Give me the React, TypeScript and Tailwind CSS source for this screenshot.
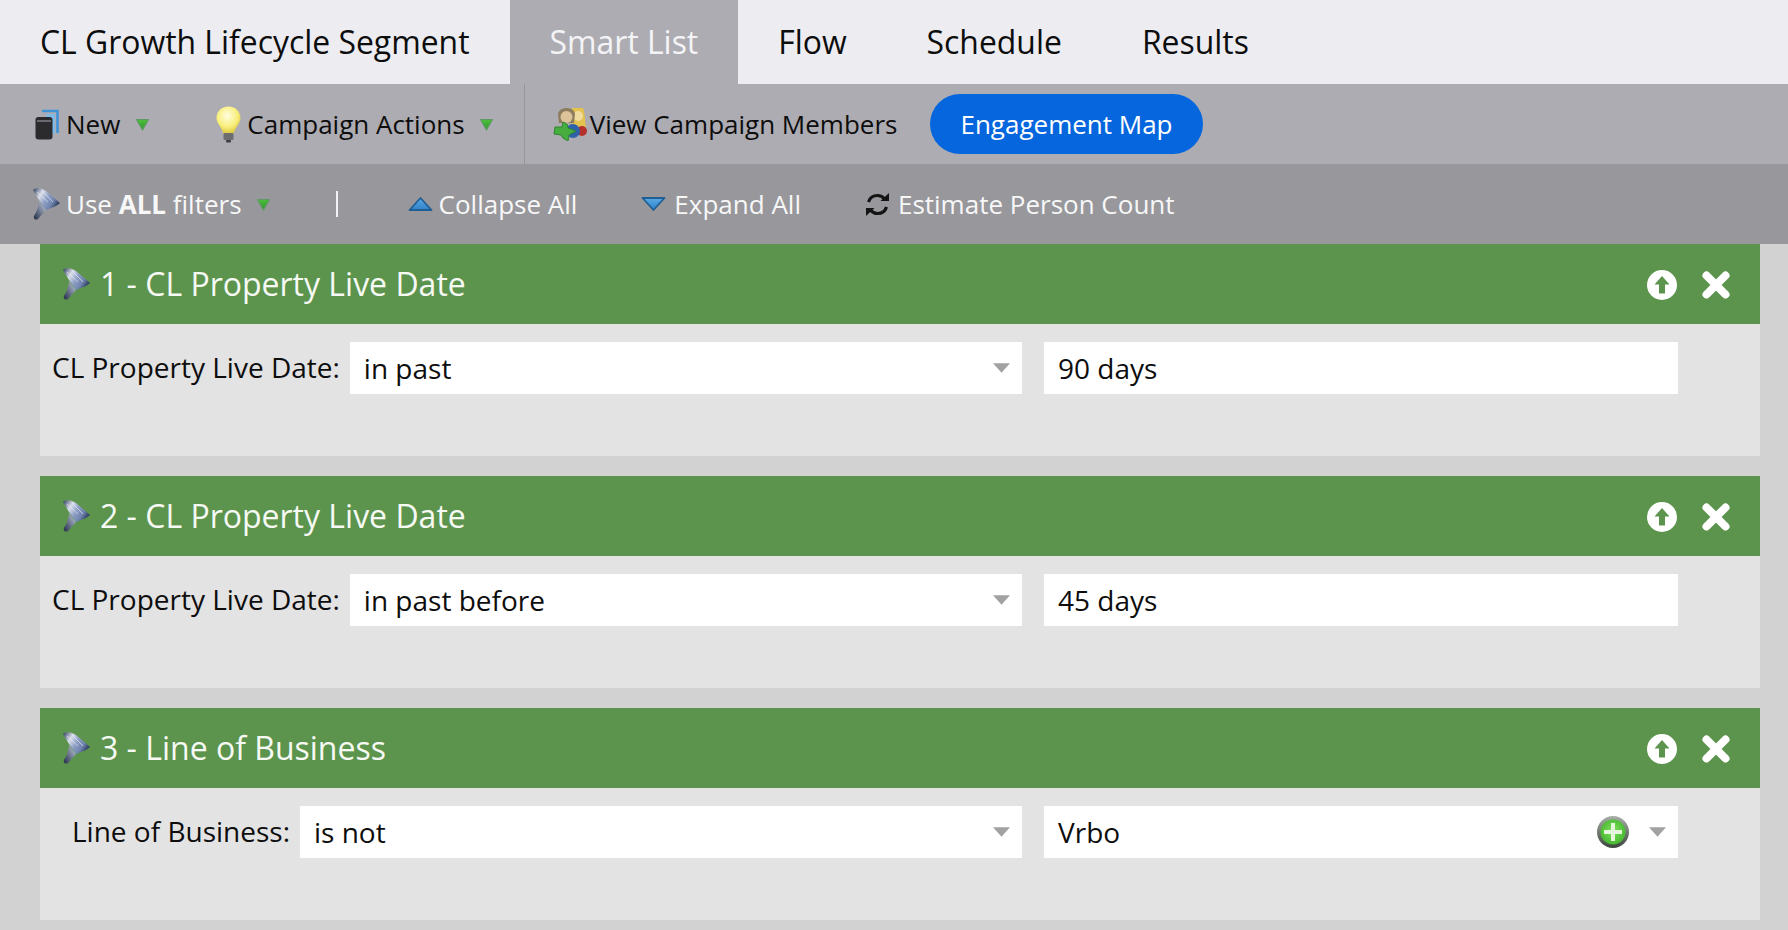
import type { ReactNode } from 'react';

function GreenArrow({ className = '' }: { className?: string }) {
  return (
    <svg viewBox="0 0 15 13" className={`w-[15px] h-[13px] shrink-0 ${className}`}>
      <defs>
        <linearGradient id="ga" x1="0" y1="0" x2="0" y2="1">
          <stop offset="0" stopColor="#4fbf3a" />
          <stop offset="1" stopColor="#2a962c" />
        </linearGradient>
      </defs>
      <path d="M1.5 1.5 H13.5 L7.5 12 Z" fill="url(#ga)" stroke="#5f9a66" strokeWidth="1.2" strokeLinejoin="round" />
    </svg>
  );
}

function Funnel({ className = '' }: { className?: string }) {
  return (
    <svg viewBox="0 0 28 32" className={`w-[28px] h-[32px] shrink-0 ${className}`}>
      <defs>
        <linearGradient id="fn" x1="0" y1="0.1" x2="1" y2="0.6">
          <stop offset="0" stopColor="#3c4a68" />
          <stop offset="0.3" stopColor="#d9deea" />
          <stop offset="0.55" stopColor="#8fa0c6" />
          <stop offset="0.8" stopColor="#6f83ad" />
          <stop offset="1" stopColor="#2e3d60" />
        </linearGradient>
        <linearGradient id="fs" x1="1" y1="0" x2="0" y2="1">
          <stop offset="0" stopColor="#c9d2e4" />
          <stop offset="1" stopColor="#1f2b45" />
        </linearGradient>
      </defs>
      <path d="M1 2 C4 -1 10 0 14 3 L28 15 C24 19 18 20 14 22 C11 17 5 10 1 2 Z" fill="url(#fn)" />
      <path d="M7 13 C10 17 12 20 14 22 L6 31 C4 32.5 1 31 2 28 C5 23 7 18 7 13 Z" fill="url(#fs)" />
      <path d="M5 4 L16 14 M10 3 L21 14" stroke="#eef1f7" strokeWidth="1" opacity="0.6" />
    </svg>
  );
}

function NewIcon() {
  return (
    <svg viewBox="0 0 24 31" className="w-[24px] h-[31px] shrink-0">
      <path d="M7 2 H22.5 V24" fill="none" stroke="#3f93d6" strokeWidth="2.6" />
      <rect x="11" y="5" width="9" height="20" fill="#7fb9e6" />
      <rect x="0.5" y="8" width="17" height="22.5" rx="3" fill="#2b2b2e" />
      <rect x="2" y="11" width="14" height="2" fill="#6a6a70" />
    </svg>
  );
}

function Bulb() {
  return (
    <svg viewBox="0 0 25 37" className="w-[25px] h-[37px] shrink-0">
      <defs>
        <radialGradient id="bb" cx="0.45" cy="0.35" r="0.7">
          <stop offset="0" stopColor="#fffde0" />
          <stop offset="0.6" stopColor="#f9ef7c" />
          <stop offset="1" stopColor="#d9c33a" />
        </radialGradient>
      </defs>
      <path d="M12.5 0.5 C20 0.5 24.5 6 24.5 12 C24.5 18 19 21 18 27 H7 C6 21 0.5 18 0.5 12 C0.5 6 5 0.5 12.5 0.5 Z" fill="url(#bb)" />
      <rect x="7.5" y="27" width="10" height="7" rx="1.5" fill="#6d6d70" />
      <rect x="10" y="34" width="5" height="2.5" rx="1" fill="#3e3e42" />
    </svg>
  );
}

function Members() {
  return (
    <svg viewBox="0 0 34 34" className="w-[34px] h-[34px] shrink-0">
      <path d="M19 1 H30 C32 6 32 14 33 20 H19 Z" fill="#e3c24e" />
      <circle cx="25" cy="9" r="5" fill="#f1dca0" />
      <path d="M5 7 C6 -1 21 -1 22 7 L21 16 L6 16 Z" fill="#8d7d5e" />
      <circle cx="13.5" cy="10" r="6" fill="#dcc39a" />
      <circle cx="29" cy="24" r="5" fill="#b5302c" />
      <circle cx="20" cy="24" r="7" fill="#2f62a8" />
      <path d="M10 15 L14 17 L15 21 L23 24 L16 28 L15 34 L10 31 L8 28 L1 27 L2 20 L9 20 Z" fill="#46ad3e" stroke="#2e8630" strokeWidth="1" />
    </svg>
  );
}

function Tri({ up }: { up?: boolean }) {
  return (
    <svg viewBox="0 0 25 16" className="w-[25px] h-[16px] shrink-0">
      <defs>
        <linearGradient id="tr" x1="0" y1="0" x2="0" y2="1">
          <stop offset="0" stopColor="#5aaae6" />
          <stop offset="1" stopColor="#2f80c8" />
        </linearGradient>
      </defs>
      <path
        d={up ? 'M12.5 2 L23.5 14 H1.5 Z' : 'M1.5 2 H23.5 L12.5 14 Z'}
        fill="url(#tr)"
        stroke="#1f5f94"
        strokeWidth="1.8"
        strokeLinejoin="round"
      />
    </svg>
  );
}

function Refresh() {
  return (
    <svg viewBox="0 0 25 25" className="w-[25px] h-[25px] shrink-0">
      <path d="M3.5 10 C5 5 9 3.5 12.5 3.5 C15.5 3.5 18 5 19.5 7" fill="none" stroke="#141414" strokeWidth="3.2" />
      <path d="M15.5 9 H24 V1 Z" fill="#141414" />
      <path d="M21.5 15 C20 20 16 21.5 12.5 21.5 C9.5 21.5 7 20 5.5 18" fill="none" stroke="#141414" strokeWidth="3.2" />
      <path d="M9.5 16 H1 V24 Z" fill="#141414" />
    </svg>
  );
}

function UpCircle() {
  return (
    <svg viewBox="0 0 30 30" className="w-[30px] h-[30px] shrink-0">
      <path
        fillRule="evenodd"
        fill="#ffffff"
        d="M15 0 A15 15 0 1 1 15 30 A15 15 0 1 1 15 0 Z M15 6 L7.5 14.5 H12 V23.5 H18 V14.5 H22.5 Z"
      />
    </svg>
  );
}

function CloseX() {
  return (
    <svg viewBox="0 0 30 30" className="w-[30px] h-[30px] shrink-0">
      <path d="M5.5 5.5 L24.5 24.5 M24.5 5.5 L5.5 24.5" stroke="#ffffff" strokeWidth="8" strokeLinecap="round" />
    </svg>
  );
}

function PlusCircle() {
  return (
    <svg viewBox="0 0 32 32" className="w-[32px] h-[32px] shrink-0">
      <defs>
        <radialGradient id="pc" cx="0.5" cy="0.45" r="0.6">
          <stop offset="0" stopColor="#84e05e" />
          <stop offset="1" stopColor="#3fb52c" />
        </radialGradient>
        <linearGradient id="pr" x1="0" y1="0" x2="0" y2="1">
          <stop offset="0" stopColor="#a9b0a9" />
          <stop offset="1" stopColor="#3c463c" />
        </linearGradient>
      </defs>
      <circle cx="16" cy="16" r="16" fill="url(#pr)" />
      <circle cx="16" cy="16" r="12.5" fill="url(#pc)" />
      <path d="M16 7 V25 M7 16 H25" stroke="#e4f7dc" strokeWidth="4" />
    </svg>
  );
}

function Caret() {
  return (
    <svg viewBox="0 0 18 10" className="w-[17px] h-[10px] shrink-0">
      <path d="M0 0 H18 L9 10 Z" fill="#a2a2a2" />
    </svg>
  );
}

function Tab({ children, active }: { children: ReactNode; active?: boolean }) {
  return (
    <div className={`h-full flex items-center px-10 ${active ? 'bg-[#adacb2] text-[#f4f4f6]' : 'text-[#0d0d0d]'}`}>
      {children}
    </div>
  );
}

type Card = {
  title: string;
  label: string;
  labelClass: string;
  op: string;
  value: string;
  pick?: boolean;
};

const CARDS: Card[] = [
  { title: '1 - CL Property Live Date', label: 'CL Property Live Date:', labelClass: 'ml-[12px]', op: 'in past', value: '90 days' },
  { title: '2 - CL Property Live Date', label: 'CL Property Live Date:', labelClass: 'ml-[12px]', op: 'in past before', value: '45 days' },
  { title: '3 - Line of Business', label: 'Line of Business:', labelClass: 'ml-[32px]', op: 'is not', value: 'Vrbo', pick: true },
];

function FilterCard({ card }: { card: Card }) {
  return (
    <div className="ml-10 mr-[28px] h-[212px] bg-[#e3e3e3] flex flex-col">
      <div className="h-[80px] shrink-0 bg-[#5c944d] flex items-center pl-[22px] pr-[29px] text-white">
        <Funnel />
        <span className="ml-[10px] text-[32px] text-[#f6f9f4]">{card.title}</span>
        <div className="ml-auto flex items-center gap-[24px] translate-y-px">
          <UpCircle />
          <CloseX />
        </div>
      </div>
      <div className="flex items-start pt-[18px] text-[28px] text-[#0d0d0d]">
        <span className={`${card.labelClass} h-[52px] flex items-center mr-[10px] whitespace-nowrap -translate-y-px`}>{card.label}</span>
        <div className="flex-1 h-[52px] bg-white flex items-center pl-[14px] pr-[12px]">
          <span>{card.op}</span>
          <span className="ml-auto">
            <Caret />
          </span>
        </div>
        <div className="ml-[22px] w-[634px] mr-[82px] h-[52px] bg-white flex items-center pl-[14px] pr-[12px] shrink-0">
          <span>{card.value}</span>
          {card.pick && (
            <span className="ml-auto flex items-center gap-[20px]">
              <PlusCircle />
              <Caret />
            </span>
          )}
        </div>
      </div>
    </div>
  );
}

export default function App() {
  return (
    <div className="w-[1788px] h-[930px] overflow-hidden bg-[#d2d2d2] font-['Open_Sans',sans-serif]">
      <div className="h-[84px] bg-[#ececf1] flex items-center text-[31.9px]">
        <Tab>CL Growth Lifecycle Segment</Tab>
        <Tab active>Smart List</Tab>
        <Tab>Flow</Tab>
        <Tab>Schedule</Tab>
        <Tab>Results</Tab>
      </div>

      <div className="h-[80px] bg-[#adacb2] flex items-center pl-[35px] text-[26px] text-[#0d0d0d]">
        <NewIcon />
        <span className="ml-[7px]">New</span>
        <GreenArrow className="ml-[15px]" />
        <span className="ml-[66px]"><Bulb /></span>
        <span className="ml-[6px]">Campaign Actions</span>
        <GreenArrow className="ml-[14px]" />
        <div className="ml-[30px] w-px h-full bg-[#98979c]" />
        <span className="ml-[28px]"><Members /></span>
        <span className="ml-[3px]">View Campaign Members</span>
        <div className="ml-[33px] h-[60px] px-[30px] rounded-full bg-[#0566dd] text-white flex items-center">Engagement Map</div>
      </div>

      <div className="h-[80px] bg-[#98979c] flex items-center pl-[32px] text-[26px] text-[#f7f7f8]">
        <Funnel />
        <span className="ml-[6px]">Use <b>ALL</b> filters</span>
        <GreenArrow className="ml-[14px]" />
        <div className="ml-[65px] w-[2px] h-[26px] bg-[#f2f2f4]" />
        <span className="ml-[70px]"><Tri up /></span>
        <span className="ml-[6px]">Collapse All</span>
        <span className="ml-[64px]"><Tri /></span>
        <span className="ml-[8px]">Expand All</span>
        <span className="ml-[64px]"><Refresh /></span>
        <span className="ml-[8px]">Estimate Person Count</span>
      </div>

      <div className="flex flex-col gap-[20px]">
        {CARDS.map((c) => (
          <FilterCard key={c.title} card={c} />
        ))}
      </div>
    </div>
  );
}
